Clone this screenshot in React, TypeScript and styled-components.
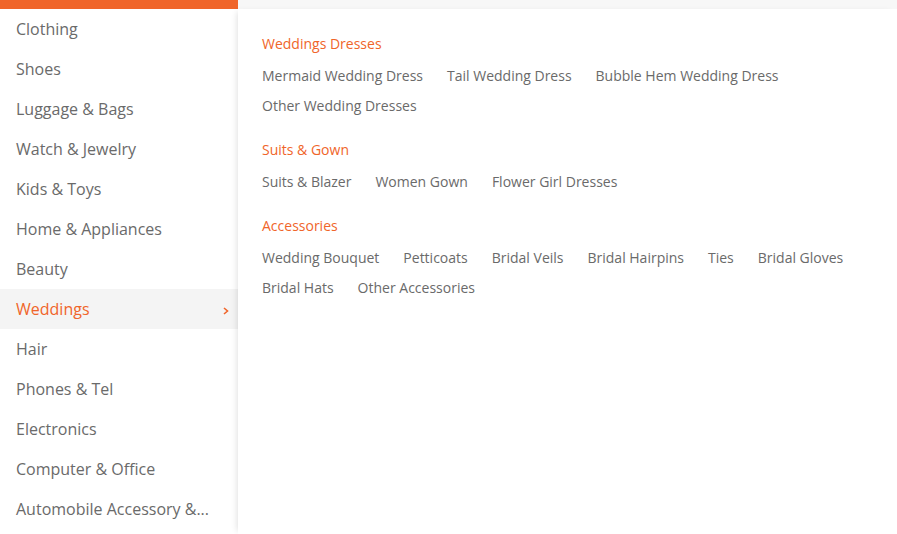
import * as React from "react";
import styled, { createGlobalStyle } from "styled-components";

const GlobalStyle = createGlobalStyle`
  html, body {
    margin: 0;
    padding: 0;
    background: #fff;
    font-family: "Open Sans", "Liberation Sans", sans-serif;
  }
`;

const Page = styled.div`
  display: flex;
  width: 897px;
  height: 534px;
  overflow: hidden;
`;

const Sidebar = styled.div`
  width: 238px;
  flex-shrink: 0;
  display: flex;
  flex-direction: column;
`;

const SideTop = styled.div`
  height: 9px;
  background: #f0652a;
`;

const CatList = styled.ul`
  margin: 0;
  padding: 0;
  list-style: none;
`;

const CatItem = styled.li<{ $active?: boolean }>`
  display: flex;
  align-items: center;
  justify-content: space-between;
  height: 40px;
  padding: 0 8px 0 16px;
  font-size: 16px;
  color: ${p => (p.$active ? "#f0652a" : "#6a6a6a")};
  background: ${p => (p.$active ? "#f4f4f4" : "transparent")};
  white-space: nowrap;
`;

const Chevron = styled.svg`
  width: 6px;
  height: 8px;
  margin-right: 1px;
  margin-top: 3px;
`;

const Main = styled.div`
  flex: 1;
  display: flex;
  flex-direction: column;
`;

const MainTop = styled.div`
  height: 9px;
  background: #f7f7f7;
`;

const Panel = styled.div`
  flex: 1;
  background: #fff;
  box-shadow: -4px 0 6px -3px rgba(0, 0, 0, 0.12);
  padding: 24px 24px 0 24px;
`;

const Group = styled.div`
  margin-bottom: 18px;
`;

const Heading = styled.div`
  font-size: 14px;
  line-height: 22px;
  color: #f0652a;
  margin-bottom: 6px;
`;

const Links = styled.div`
  display: flex;
  flex-wrap: wrap;
  column-gap: 24px;
`;

const LinkItem = styled.a`
  font-size: 14px;
  line-height: 30px;
  color: #6a6a6a;
  text-decoration: none;
`;

const categories = [
  "Clothing",
  "Shoes",
  "Luggage & Bags",
  "Watch & Jewelry",
  "Kids & Toys",
  "Home & Appliances",
  "Beauty",
  "Weddings",
  "Hair",
  "Phones & Tel",
  "Electronics",
  "Computer & Office",
  "Automobile Accessory &...",
];

const groups = [
  {
    title: "Weddings Dresses",
    items: [
      "Mermaid Wedding Dress",
      "Tail Wedding Dress",
      "Bubble Hem Wedding Dress",
      "Other Wedding Dresses",
    ],
  },
  {
    title: "Suits & Gown",
    items: ["Suits & Blazer", "Women Gown", "Flower Girl Dresses"],
  },
  {
    title: "Accessories",
    items: [
      "Wedding Bouquet",
      "Petticoats",
      "Bridal Veils",
      "Bridal Hairpins",
      "Ties",
      "Bridal Gloves",
      "Bridal Hats",
      "Other Accessories",
    ],
  },
];

export default function App() {
  return (
    <>
      <GlobalStyle />
      <Page>
        <Sidebar>
          <SideTop />
          <CatList>
            {categories.map(c => (
              <CatItem key={c} $active={c === "Weddings"}>
                <span>{c}</span>
                {c === "Weddings" && (
                  <Chevron viewBox="0 0 6 8">
                    <path d="M1 1 L4.5 4 L1 7" fill="none" stroke="#f0652a" strokeWidth="1.6" />
                  </Chevron>
                )}
              </CatItem>
            ))}
          </CatList>
        </Sidebar>
        <Main>
          <MainTop />
          <Panel>
            {groups.map(g => (
              <Group key={g.title}>
                <Heading>{g.title}</Heading>
                <Links>
                  {g.items.map(i => (
                    <LinkItem key={i}>{i}</LinkItem>
                  ))}
                </Links>
              </Group>
            ))}
          </Panel>
        </Main>
      </Page>
    </>
  );
}
